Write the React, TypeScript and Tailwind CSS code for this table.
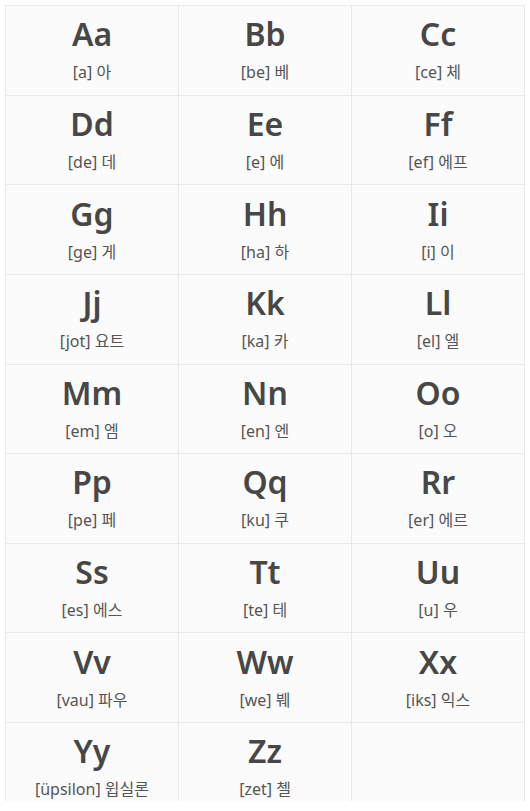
import React from "react";

const items: [string, string][] = [
  ["Aa", "[a] 아"],
  ["Bb", "[be] 베"],
  ["Cc", "[ce] 체"],
  ["Dd", "[de] 데"],
  ["Ee", "[e] 에"],
  ["Ff", "[ef] 에프"],
  ["Gg", "[ge] 게"],
  ["Hh", "[ha] 하"],
  ["Ii", "[i] 이"],
  ["Jj", "[jot] 요트"],
  ["Kk", "[ka] 카"],
  ["Ll", "[el] 엘"],
  ["Mm", "[em] 엠"],
  ["Nn", "[en] 엔"],
  ["Oo", "[o] 오"],
  ["Pp", "[pe] 페"],
  ["Qq", "[ku] 쿠"],
  ["Rr", "[er] 에르"],
  ["Ss", "[es] 에스"],
  ["Tt", "[te] 테"],
  ["Uu", "[u] 우"],
  ["Vv", "[vau] 파우"],
  ["Ww", "[we] 붸"],
  ["Xx", "[iks] 익스"],
  ["Yy", "[üpsilon] 윕실론"],
  ["Zz", "[zet] 첼"],
  ["", ""],
];

export default function App() {
  return (
    <div
      className="w-[530px] h-[811px] bg-white p-[5px]"
      style={{ fontFamily: '"Noto Sans", "Noto Sans CJK KR", sans-serif' }}
    >
      <div className="h-[796px] overflow-hidden border-l border-t border-[#e9e9e9] bg-[#fbfbfb]">
        <div className="grid grid-cols-3">
          {items.map(([big, small], i) => (
            <div
              key={i}
              className="h-[89.625px] border-r border-b border-[#e9e9e9] flex flex-col items-center justify-center gap-[6px]"
            >
              {big && (
                <>
                  <div className="text-[32px] leading-[40px] font-semibold text-[#474747] -mt-[2px]">{big}</div>
                  <div className="text-[16px] leading-[24px] text-[#555]">{small}</div>
                </>
              )}
            </div>
          ))}
        </div>
      </div>
    </div>
  );
}
